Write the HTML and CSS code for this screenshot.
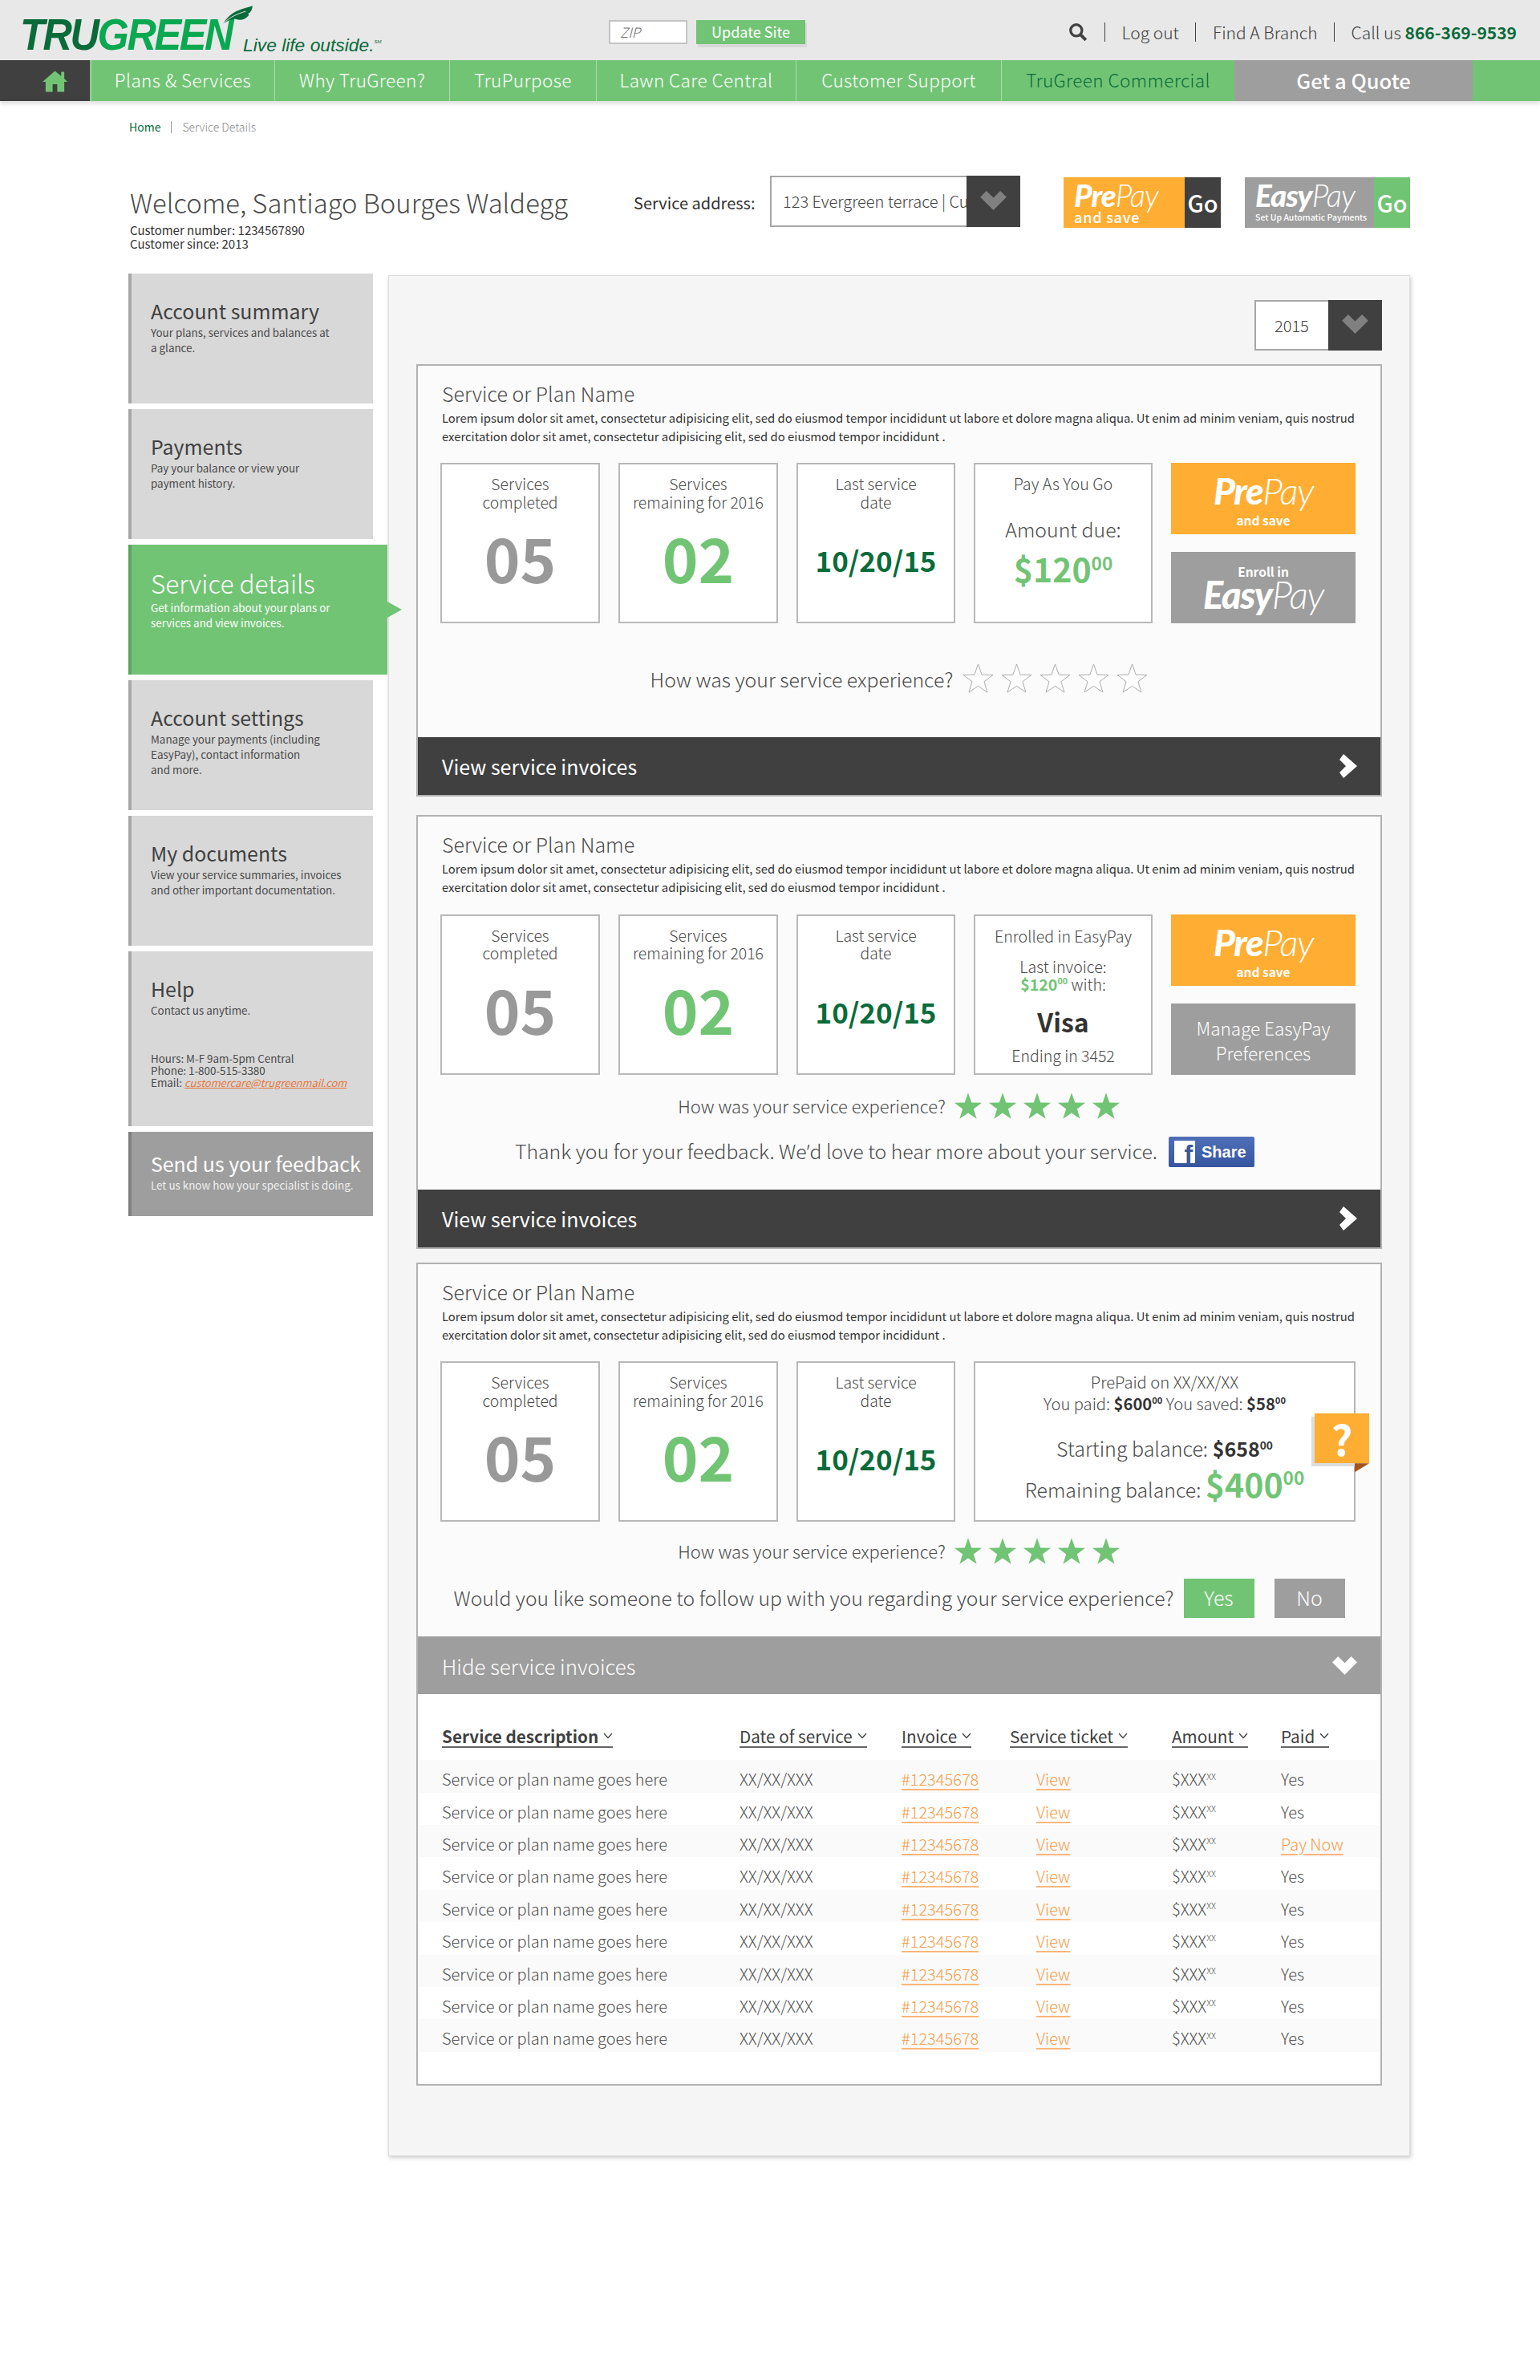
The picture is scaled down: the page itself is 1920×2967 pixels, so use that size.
FILE: index.html
```html
<!DOCTYPE html>
<html lang="en">
<head>
<meta charset="utf-8">
<title>TruGreen - Service Details</title>
<link rel="stylesheet" href="styles.css">
</head>
<body>
<svg class="defs" aria-hidden="true">
  <symbol id="star" viewBox="0 0 40 38"><polygon points="20,1 24.7,14.5 39,14.8 27.6,23.4 31.8,37 20,29 8.2,37 12.4,23.4 1,14.8 15.3,14.5"/></symbol>
  <symbol id="chev-d" viewBox="0 0 34 26"><polygon points="0,9 8,1 17,10 26,1 34,9 17,26"/></symbol>
  <symbol id="chev-r" viewBox="0 0 22 30"><polygon points="5,0 22,15 5,30 0,23 8,15 0,7"/></symbol>
  <symbol id="chev-s" viewBox="0 0 12 8"><polyline points="1,1 6,6.5 11,1" fill="none" stroke="currentColor" stroke-width="1.3"/></symbol>
</svg>

<header class="topbar">
  <div class="logo">
    <span class="logo-word"><span class="logo-tru">TRU</span><span class="logo-green">GREEN</span></span>
    <svg class="logo-leaf" viewBox="0 0 40 24"><path d="M1 23C6 15 12 9 20 6 27 3 34 2 39 0 38 6 36 9 33 10 35 11 34 13 32 14 29 17 24 19 18 17 14 16 8 18 1 23Z" fill="#0a6b3a"/><path d="M1 23C10 14 20 10 30 7" stroke="#e8e8e8" stroke-width="1" fill="none"/></svg>
    <span class="logo-tag">Live life outside.<sup class="logo-sm">SM</sup></span>
  </div>
  <div class="zip-box">ZIP</div>
  <div class="update-btn">Update Site</div>
  <nav class="util">
    <svg class="search-ico" viewBox="0 0 22 22"><circle cx="9" cy="9" r="6.5" fill="none" stroke="#404040" stroke-width="3"/><line x1="14" y1="14" x2="20" y2="20" stroke="#404040" stroke-width="3.6"/></svg>
    <span class="util-sep"></span>
    <span>Log out</span>
    <span class="util-sep"></span>
    <span>Find A Branch</span>
    <span class="util-sep"></span>
    <span>Call us <b class="phone">866-369-9539</b></span>
  </nav>
</header>

<nav class="mainnav">
  <a class="nav-home"><svg viewBox="0 0 32 27"><path d="M16 0 24 6.5V1H28V10L32 14H28V27H19V17H13V27H4V14H0Z" fill="#72c475"/></svg></a>
  <a class="nav-item w-plans">Plans &amp; Services</a>
  <a class="nav-item w-why">Why TruGreen?</a>
  <a class="nav-item w-pur">TruPurpose</a>
  <a class="nav-item w-lawn">Lawn Care Central</a>
  <a class="nav-item w-sup">Customer Support</a>
  <a class="nav-item w-com">TruGreen Commercial</a>
  <a class="nav-quote">Get a Quote</a>
</nav>

<div class="crumbs"><a class="crumb-home">Home</a><span class="crumb-sep"></span><span>Service Details</span></div>

<section class="welcome">
  <div class="welcome-left">
    <h1>Welcome, Santiago Bourges Waldegg</h1>
    <p>Customer number: 1234567890</p>
    <p>Customer since: 2013</p>
  </div>
  <div class="addr-label">Service address:</div>
  <div class="select addr-select">
    <div class="select-val">123 Evergreen terrace | Customer</div>
    <div class="select-arrow"><svg><use href="#chev-d"/></svg></div>
  </div>
  <div class="promo promo-pre">
    <div class="promo-main"><div class="brand brand-s"><b>Pre</b><i>Pay</i></div><div class="promo-sub">and save</div></div>
    <div class="promo-go go-dark">Go</div>
  </div>
  <div class="promo promo-easy">
    <div class="promo-main"><div class="brand brand-s"><b>Easy</b><i>Pay</i></div><div class="promo-sub2">Set Up Automatic Payments</div></div>
    <div class="promo-go go-green">Go</div>
  </div>
</section>

<div class="columns">
  <aside class="side">
    <a class="side-item"><h3>Account summary</h3><p>Your plans, services and balances at<br>a glance.</p></a>
    <a class="side-item"><h3>Payments</h3><p>Pay your balance or view your<br>payment history.</p></a>
    <a class="side-item active"><h3>Service details</h3><p>Get information about your plans or<br>services and view invoices.</p></a>
    <a class="side-item"><h3>Account settings</h3><p>Manage your payments (including<br>EasyPay), contact information<br>and more.</p></a>
    <a class="side-item"><h3>My documents</h3><p>View your service summaries, invoices<br>and other important documentation.</p></a>
    <div class="side-item help"><h3>Help</h3><p>Contact us anytime.</p>
      <p class="help-lines">Hours: M-F 9am-5pm Central<br>Phone: 1-800-515-3380<br>Email: <a class="mail">customercare@trugreenmail.com</a></p></div>
    <a class="side-item feedback"><h3>Send us your feedback</h3><p>Let us know how your specialist is doing.</p></a>
  </aside>

  <main class="panel">
    <div class="year-row">
      <div class="select year-select">
        <div class="select-val">2015</div>
        <div class="select-arrow"><svg><use href="#chev-d"/></svg></div>
      </div>
    </div>

    <article class="card">
      <h2>Service or Plan Name</h2>
      <p class="lorem">Lorem ipsum dolor sit amet, consectetur adipisicing elit, sed do eiusmod tempor incididunt ut labore et dolore magna aliqua. Ut enim ad minim veniam, quis nostrud<br>exercitation dolor sit amet, consectetur adipisicing elit, sed do eiusmod tempor incididunt .</p>
      <div class="stats">
        <div class="stat w199"><div class="stat-label">Services<br>completed</div><div class="stat-num grey">05</div></div>
        <div class="stat w199"><div class="stat-label">Services<br>remaining for 2016</div><div class="stat-num green">02</div></div>
        <div class="stat w198"><div class="stat-label">Last service<br>date</div><div class="stat-date">10/20/15</div></div>
        <div class="stat w223 due">
          <div class="due-head">Pay As You Go</div>
          <div class="due-label">Amount due:</div>
          <div class="due-amt">$120<sup>00</sup></div>
        </div>
        <div class="actions">
          <a class="act act-orange"><div class="brand brand-l"><b>Pre</b><i>Pay</i></div><div class="act-sub">and save</div></a>
          <a class="act act-grey"><div class="act-sub enroll">Enroll in</div><div class="brand brand-x"><b>Easy</b><i>Pay</i></div></a>
        </div>
      </div>
      <div class="rating rating-lg">
        <span>How was your service experience?</span>
        <span class="stars stars-lg">
          <svg><use href="#star"/></svg><svg><use href="#star"/></svg><svg><use href="#star"/></svg><svg><use href="#star"/></svg><svg><use href="#star"/></svg>
        </span>
      </div>
      <a class="bar bar-dark bar-c1">View service invoices<svg class="chev-r"><use href="#chev-r"/></svg></a>
    </article>

    <article class="card card-2">
      <h2>Service or Plan Name</h2>
      <p class="lorem">Lorem ipsum dolor sit amet, consectetur adipisicing elit, sed do eiusmod tempor incididunt ut labore et dolore magna aliqua. Ut enim ad minim veniam, quis nostrud<br>exercitation dolor sit amet, consectetur adipisicing elit, sed do eiusmod tempor incididunt .</p>
      <div class="stats">
        <div class="stat w199"><div class="stat-label">Services<br>completed</div><div class="stat-num grey">05</div></div>
        <div class="stat w199"><div class="stat-label">Services<br>remaining for 2016</div><div class="stat-num green">02</div></div>
        <div class="stat w198"><div class="stat-label">Last service<br>date</div><div class="stat-date">10/20/15</div></div>
        <div class="stat w223 enrolled">
          <div class="en-head">Enrolled in EasyPay</div>
          <div class="en-line">Last invoice:</div>
          <div class="en-line"><b class="en-amt">$120<sup>00</sup></b> with:</div>
          <div class="en-visa">Visa</div>
          <div class="en-end">Ending in 3452</div>
        </div>
        <div class="actions">
          <a class="act act-orange"><div class="brand brand-l"><b>Pre</b><i>Pay</i></div><div class="act-sub">and save</div></a>
          <a class="act act-grey act-manage">Manage EasyPay<br>Preferences</a>
        </div>
      </div>
      <div class="rating rating-sm">
        <span>How was your service experience?</span>
        <span class="stars stars-on">
          <svg><use href="#star"/></svg><svg><use href="#star"/></svg><svg><use href="#star"/></svg><svg><use href="#star"/></svg><svg><use href="#star"/></svg>
        </span>
      </div>
      <div class="thanks">
        <span class="thanks-text">Thank you for your feedback. We<span class="apos">’</span>d love to hear more about your service.</span>
        <a class="fb"><span class="fb-f">f</span><span>Share</span></a>
      </div>
      <a class="bar bar-dark bar-c2">View service invoices<svg class="chev-r"><use href="#chev-r"/></svg></a>
    </article>

    <article class="card card-3">
      <h2>Service or Plan Name</h2>
      <p class="lorem">Lorem ipsum dolor sit amet, consectetur adipisicing elit, sed do eiusmod tempor incididunt ut labore et dolore magna aliqua. Ut enim ad minim veniam, quis nostrud<br>exercitation dolor sit amet, consectetur adipisicing elit, sed do eiusmod tempor incididunt .</p>
      <div class="stats">
        <div class="stat w199"><div class="stat-label">Services<br>completed</div><div class="stat-num grey">05</div></div>
        <div class="stat w199"><div class="stat-label">Services<br>remaining for 2016</div><div class="stat-num green">02</div></div>
        <div class="stat w198"><div class="stat-label">Last service<br>date</div><div class="stat-date">10/20/15</div></div>
        <div class="stat prepaid">
          <div class="pp-head">PrePaid on XX/XX/XX</div>
          <div class="pp-head">You paid: <b>$600<sup>00</sup></b> You saved: <b>$58<sup>00</sup></b></div>
          <div class="pp-start">Starting balance: <b>$658<sup>00</sup></b></div>
          <div class="pp-rem">Remaining balance: <b>$400<sup>00</sup></b></div>
          <div class="flag">?</div>
        </div>
      </div>
      <div class="rating rating-sm rating-c3">
        <span>How was your service experience?</span>
        <span class="stars stars-on">
          <svg><use href="#star"/></svg><svg><use href="#star"/></svg><svg><use href="#star"/></svg><svg><use href="#star"/></svg><svg><use href="#star"/></svg>
        </span>
      </div>
      <div class="follow">
        <span class="follow-text">Would you like someone to follow up with you regarding your service experience?</span>
        <a class="yn yn-yes">Yes</a>
        <a class="yn yn-no">No</a>
      </div>
      <a class="bar bar-grey">Hide service invoices<svg class="chev-d"><use href="#chev-d"/></svg></a>
      <div class="invoices">
        <div class="inv-head">
          <div><span class="th th-sel">Service description<svg><use href="#chev-s"/></svg></span></div>
          <div><span class="th">Date of service<svg><use href="#chev-s"/></svg></span></div>
          <div><span class="th">Invoice<svg><use href="#chev-s"/></svg></span></div>
          <div><span class="th">Service ticket<svg><use href="#chev-s"/></svg></span></div>
          <div><span class="th">Amount<svg><use href="#chev-s"/></svg></span></div>
          <div><span class="th">Paid<svg><use href="#chev-s"/></svg></span></div>
        </div>
        <div class="inv-row"><div>Service or plan name goes here</div><div>XX/XX/XXX</div><div><a class="lnk">#12345678</a></div><div class="td-view"><a class="lnk">View</a></div><div>$XXX<sup>XX</sup></div><div>Yes</div></div>
        <div class="inv-row"><div>Service or plan name goes here</div><div>XX/XX/XXX</div><div><a class="lnk">#12345678</a></div><div class="td-view"><a class="lnk">View</a></div><div>$XXX<sup>XX</sup></div><div>Yes</div></div>
        <div class="inv-row"><div>Service or plan name goes here</div><div>XX/XX/XXX</div><div><a class="lnk">#12345678</a></div><div class="td-view"><a class="lnk">View</a></div><div>$XXX<sup>XX</sup></div><div><a class="lnk">Pay Now</a></div></div>
        <div class="inv-row"><div>Service or plan name goes here</div><div>XX/XX/XXX</div><div><a class="lnk">#12345678</a></div><div class="td-view"><a class="lnk">View</a></div><div>$XXX<sup>XX</sup></div><div>Yes</div></div>
        <div class="inv-row"><div>Service or plan name goes here</div><div>XX/XX/XXX</div><div><a class="lnk">#12345678</a></div><div class="td-view"><a class="lnk">View</a></div><div>$XXX<sup>XX</sup></div><div>Yes</div></div>
        <div class="inv-row"><div>Service or plan name goes here</div><div>XX/XX/XXX</div><div><a class="lnk">#12345678</a></div><div class="td-view"><a class="lnk">View</a></div><div>$XXX<sup>XX</sup></div><div>Yes</div></div>
        <div class="inv-row"><div>Service or plan name goes here</div><div>XX/XX/XXX</div><div><a class="lnk">#12345678</a></div><div class="td-view"><a class="lnk">View</a></div><div>$XXX<sup>XX</sup></div><div>Yes</div></div>
        <div class="inv-row"><div>Service or plan name goes here</div><div>XX/XX/XXX</div><div><a class="lnk">#12345678</a></div><div class="td-view"><a class="lnk">View</a></div><div>$XXX<sup>XX</sup></div><div>Yes</div></div>
        <div class="inv-row"><div>Service or plan name goes here</div><div>XX/XX/XXX</div><div><a class="lnk">#12345678</a></div><div class="td-view"><a class="lnk">View</a></div><div>$XXX<sup>XX</sup></div><div>Yes</div></div>
      </div>
    </article>
  </main>
</div>
</body>
</html>
```
FILE: styles.css
```css
* { box-sizing: border-box; }
html, body { margin: 0; padding: 0; }
body {
  width: 1920px;
  min-height: 2967px;
  background: #fff;
  color: #404040;
  font-family: "Noto Sans CJK SC", "Noto Sans", sans-serif;
  font-weight: 400;
}
h1, h2, h3, p { margin: 0; font-weight: inherit; }
sup { font-size: 55%; line-height: 0; vertical-align: baseline; position: relative; top: -0.7em; }
.defs { display: none; }
.apos { font-family: "Noto Sans", sans-serif; }

/* top bar */
.topbar { height: 75px; background: #e8e8e8; display: flex; align-items: flex-start; }
.logo { position: relative; flex: 0 0 759px; height: 75px; }
.logo-word {
  position: absolute; left: 25px; top: 11px;
  font: italic 700 56px/64px "Liberation Sans", sans-serif;
  letter-spacing: -2.6px; white-space: nowrap;
  transform: scaleX(.9); transform-origin: left center;
}
.logo-tru { color: #0a6b3a; }
.logo-green { color: #0aa851; }
.logo-leaf { position: absolute; left: 277px; top: 7px; width: 39px; height: 24px; }
.logo-tag {
  position: absolute; left: 303px; top: 41px;
  font: italic 400 22.8px/30px "Liberation Sans", sans-serif;
  color: #0a6b3a; white-space: nowrap;
}
.logo-sm { font-size: 6px; top: -1.6em; }
.zip-box {
  margin-top: 25px; width: 98px; height: 30px; background: #fff;
  border: 2px solid #c4c4c4; padding-left: 12px;
  font-size: 17px; line-height: 26px; font-style: italic; color: #707070; font-weight: 300;
}
.update-btn {
  margin: 25px 0 0 11px; width: 136px; height: 30px; background: #72c475; color: #fff;
  font-size: 18px; line-height: 29px; text-align: center; box-shadow: 2px 4px 0 #d8d8d8;
}
.util {
  margin: 22px 29px 0 auto; display: flex; align-items: center; gap: 20.5px;
  height: 36px; font-size: 21px; font-weight: 300; color: #404040;
}
.search-ico { width: 24px; height: 24px; }
.util-sep { width: 1px; height: 24px; background: #404040; }
.phone { color: #0a6b3a; font-weight: 700; }

/* nav */
.mainnav { height: 51px; background: #72c475; display: flex; box-shadow: 0 4px 4px #e4e4e4; }
.nav-home { width: 112px; margin-right: 1px; background: #404040; display: flex; align-items: center; justify-content: center; }
.nav-home svg { width: 31px; height: 27px; margin: 1px 0 0 24px; }
.nav-item {
  color: #fff; font-size: 22.5px; line-height: 48px; text-align: center; font-weight: 300;
  border-left: 1px solid #a8dcaa; white-space: nowrap; letter-spacing: .4px;
}
.nav-item:first-of-type { border-left: 0; }
.w-plans { width: 229px; } .w-why { width: 218px; } .w-pur { width: 183px; }
.w-lawn { width: 249px; } .w-sup { width: 256px; } .w-com { width: 291px; color: #0a6b3a; }
.nav-quote { width: 297px; background: #9e9e9e; color: #fff; font-size: 25.5px; line-height: 49px; text-align: center; font-weight: 500; }

/* breadcrumb */
.crumbs { margin: 23px 0 0 161px; height: 18px; display: flex; align-items: center; font-size: 14px; font-weight: 300; color: #8a8a8a; line-height: 18px; }
.crumb-home { color: #0a6b3a; font-weight: 400; }
.crumb-sep { width: 1px; height: 15px; background: #999; margin: 0 13px; }

/* welcome row */
.welcome { margin: 52px 0 0 162px; height: 122px; display: flex; align-items: flex-start; }
.welcome-left { width: 628px; }
.welcome-left h1 { font-size: 32.8px; line-height: 66px; font-weight: 300; margin-bottom: -7px; white-space: nowrap; color: #4a4a4a; }
.welcome-left p { font-size: 15px; line-height: 17px; color: #333; }
.addr-label { width: 170px; font-size: 20px; line-height: 68px; color: #333; }
.select { display: flex; border: 2px solid #a6a6a6; background: #fff; }
.select-val { flex: 1; overflow: hidden; white-space: nowrap; }
.select-arrow { background: #404040; display: flex; align-items: center; justify-content: center; margin: -2px -2px -2px 0; }
.select-arrow svg { width: 33px; height: 25px; fill: #808080; margin-top: -4px; }
.addr-select { width: 312px; height: 64px; }
.addr-select .select-val { padding-left: 14px; font-size: 20px; line-height: 60px; font-weight: 300; }
.addr-select .select-arrow { width: 67px; }

.promo { display: flex; height: 63px; margin-top: 2px; color: #fff; }
.promo-pre { margin-left: 54px; width: 196px; }
.promo-easy { margin-left: 30px; width: 206px; }
.promo-main { flex: 1; padding-left: 13px; }
.promo-pre .promo-main { background: #ffae33; }
.promo-easy .promo-main { background: #9e9e9e; }
.promo-go { display: flex; align-items: center; justify-content: center; font-size: 29px; font-weight: 500; line-height: 1; }
.go-dark { width: 45px; background: #404040; }
.go-green { width: 45px; background: #72c475; }
.brand { font-family: Lato, "Liberation Sans", sans-serif; font-style: italic; white-space: nowrap; }
.brand b { font-weight: 900; }
.brand i { font-weight: 300; }
.brand-s { font-size: 38.5px; line-height: 38px; padding-top: 3px; letter-spacing: -1px; }
.promo-sub { font-size: 18px; line-height: 18px; font-weight: 500; letter-spacing: .8px; margin-top: -1px; }
.promo-sub2 { font-size: 10.5px; line-height: 16px; font-weight: 500; margin-top: 1px; }

/* columns */
.columns { margin: 0 0 0 160px; display: flex; align-items: flex-start; width: 1598px; }
.side { width: 324px; flex: none; display: flex; flex-direction: column; gap: 7px; }
.side-item {
  display: block; width: 305px; height: 162px; background: #d8d8d8; border-left: 4px solid #a8a8a8;
  padding: 29px 0 0 24px; color: #4a4a4a;
}
.side-item h3 { font-size: 24.9px; line-height: 34px; color: #404040; white-space: nowrap; font-weight: 400; }
.side-item p { font-size: 13.4px; line-height: 19px; margin-top: 1px; }
.side-item.active { position: relative; width: 323px; background: #72c475; border-left-color: #5aa65e; color: #fff; padding-top: 24px; }
.side-item.active::after {
  content: ""; position: absolute; left: 100%; top: 71px;
  border-left: 18px solid #72c475; border-top: 10px solid transparent; border-bottom: 10px solid transparent;
}
.side-item.active h3 { font-size: 31.6px; line-height: 46px; color: #fff; font-weight: 300; }
.side-item.active p { margin-top: -1px; }
.side-item.help { height: 218px; }
.help .help-lines { margin-top: 43px; line-height: 15px; }
.mail { color: #e8743a; font-style: italic; text-decoration: underline; font-size: 12.9px; }
.side-item.feedback { height: 105px; background: #9e9e9e; border-left-color: #808080; padding-top: 22px; color: #f0f0f0; }
.feedback h3 { color: #fff; }

/* panel */
.panel {
  width: 1274px; flex: none; margin-top: 2px; background: #f5f5f5; border: 1px solid #ddd;
  box-shadow: 1px 2px 5px rgba(0,0,0,.22); padding: 30px 34px 87px;
}
.year-row { display: flex; justify-content: flex-end; margin-bottom: 17px; }
.year-select { width: 159px; height: 63px; }
.year-select .select-val { padding-left: 23px; font-size: 20px; line-height: 59px; font-weight: 300; }
.year-select .select-arrow { width: 67px; }

.card { width: 1204px; background: #fbfbfb; border: 2px solid #b2b2b2; margin-bottom: 23px; }
.card-2 { margin-bottom: 17px; }
.card-3 { margin-bottom: 0; height: 1026px; }
.card h2 { font-size: 25px; line-height: 40px; font-weight: 300; padding: 14px 0 0 30px; color: #4a4a4a; }
.lorem { font-size: 14.85px; line-height: 22.7px; padding-left: 30px; color: #333; white-space: nowrap; margin-bottom: 22px; }
.stats { display: flex; gap: 23px; padding-left: 28px; height: 200px; }
.stat { background: #fff; border: 2px solid #b8b8b8; height: 200px; text-align: center; font-weight: 300; flex: none; color: #4a4a4a; }
.w199 { width: 199px; } .w198 { width: 198px; } .w223 { width: 223px; }
.stat-label { font-size: 19.4px; line-height: 22.5px; padding-top: 13px; }
.stat-num { font-size: 76px; line-height: 100px; margin-top: 7px; font-weight: 700; }
.grey { color: #999; }
.green { color: #72c475; }
.stat-date { font-size: 35px; line-height: 100px; margin-top: 11px; font-weight: 700; color: #0a6b3a; }
.due-head { font-size: 19.8px; line-height: 26px; padding-top: 11px; }
.due-label { font-size: 24.8px; line-height: 34px; margin-top: 26px; }
.due-amt { font-size: 41px; line-height: 56px; margin-top: 4px; font-weight: 700; color: #72c475; }
.actions { width: 230px; flex: none; display: flex; flex-direction: column; gap: 22px; }
.act { flex: 0 0 89px; display: block; color: #fff; text-align: center; }
.act-orange { background: #ffae33; }
.act-grey { background: #9e9e9e; }
.brand-l { font-size: 46px; line-height: 46px; padding-top: 12px; letter-spacing: -1.4px; }
.brand-x { font-size: 47px; line-height: 36px; letter-spacing: -1.4px; }
.act-sub { font-size: 15.5px; line-height: 22px; font-weight: 700; }
.act-orange .act-sub { margin-top: 2px; }
.enroll { padding-top: 13px; }
.act-manage { font-size: 22.5px; line-height: 31px; font-weight: 300; padding-top: 15px; }

.rating { display: flex; align-items: center; justify-content: center; color: #4a4a4a; }
.rating-lg { margin-top: 49px; height: 39px; font-size: 24.8px; font-weight: 300; gap: 12px; }
.rating-sm { margin-top: 21px; height: 35px; font-size: 21.9px; font-weight: 300; gap: 10px; }
.rating-c3 { margin-top: 19px; }
.stars { display: flex; gap: 9px; }
.stars svg { width: 39px; height: 39px; fill: #fff; stroke: #aaa; stroke-width: 1; }
.stars-lg svg { overflow: visible; }
.stars-on { gap: 7px; }
.stars-on svg { width: 36px; height: 35px; fill: #72c475; stroke: none; }

.bar { display: flex; align-items: center; justify-content: space-between; height: 72px; padding: 0 29px 0 30px; color: #fff; font-size: 25px; }
.bar-dark { background: #404040; }
.bar-grey { background: #9e9e9e; margin-top: 23px; font-size: 25.8px; font-weight: 300; }
.bar-c1 { margin-top: 54px; }
.bar-c2 { margin-top: 28px; }
.chev-r { width: 22px; height: 30px; fill: #fff; }
.chev-d { width: 31px; height: 24px; fill: #fff; }

.thanks { margin: 21px 36px 0 0; display: flex; align-items: center; justify-content: center; gap: 14px; height: 38px; font-size: 24.8px; font-weight: 300; color: #4a4a4a; white-space: nowrap; }
.thanks-text { margin-top: -4px; }
.fb {
  width: 107px; height: 38px; border-radius: 2px; background: linear-gradient(#4f6fb8, #35559f);
  display: flex; align-items: center; gap: 8px; padding-left: 7px; color: #fff;
  font: 700 20px/38px "Liberation Sans", sans-serif;
}
.fb-f {
  width: 26px; height: 28px; background: #fff; color: #3b5998; font-size: 32px; line-height: 34px;
  text-align: right; padding-right: 3px; overflow: hidden; border-radius: 1px;
}

/* enrolled box */
.en-head { font-size: 19.6px; line-height: 26px; padding-top: 12px; }
.en-line { font-size: 19.6px; line-height: 22px; }
.en-head + .en-line { margin-top: 14px; }
.en-amt { color: #72c475; font-weight: 700; }
.en-visa { font-size: 32px; line-height: 44px; font-weight: 700; margin-top: 13px; color: #333; }
.en-end { font-size: 19.5px; line-height: 26px; margin-top: 8px; }

/* prepaid box */
.prepaid { width: 476px; position: relative; }
.pp-head { font-size: 20.2px; line-height: 27px; }
.pp-head:first-child { padding-top: 11px; line-height: 26px; height: 37px; }
.pp-head b { font-weight: 700; color: #333; }
.pp-start { font-size: 25px; line-height: 36px; margin-top: 24px; }
.pp-start b { font-weight: 700; color: #333; }
.pp-rem { font-size: 24.8px; line-height: 48px; margin-top: 2px; }
.pp-rem b { font-size: 41px; color: #72c475; font-weight: 700; }
.flag {
  position: absolute; left: 423px; top: 63px; width: 68px; height: 62px;
  background: #ffae33; color: #fff; font-size: 52px; line-height: 62px; font-weight: 700; text-align: center;
  box-shadow: -4px 4px 0 #ddd;
}
.flag::after {
  content: ""; position: absolute; right: 0; top: 100%; width: 18px; height: 11px;
  background: #a3541a; clip-path: polygon(0 0, 100% 0, 0 100%);
}

.follow { margin-top: 17px; height: 49px; display: flex; align-items: center; justify-content: center; font-size: 24.7px; font-weight: 300; white-space: nowrap; color: #4a4a4a; }
.follow-text { margin-top: -4px; }
.yn { width: 88px; height: 49px; color: #fff; text-align: center; line-height: 47px; font-size: 25px; }
.yn-yes { background: #72c475; margin-left: 12px; }
.yn-no { background: #9e9e9e; margin-left: 25px; }

/* invoice table */
.invoices { background: #fff; height: 485px; padding-top: 39px; }
.inv-head, .inv-row { display: grid; grid-template-columns: 371px 202px 135px 202px 136px 1fr; padding-left: 30px; }
.inv-head { font-size: 20.7px; line-height: 26px; margin-bottom: 15px; height: 28px; }
.th { display: inline-flex; align-items: center; gap: 6px; height: 28px; border-bottom: 2px solid #666; white-space: nowrap; }
.th svg { width: 12px; height: 8px; color: #404040; }
.th-sel { font-weight: 700; }
.inv-row { height: 40.4px; padding-top: 11px; font-size: 20px; line-height: 26px; font-weight: 300; white-space: nowrap; color: #4f4f4f; }
.inv-row:nth-of-type(even) { background: #fafafa; }
.lnk { color: #f79a46; text-decoration: underline; text-decoration-color: #fbb67a; text-decoration-thickness: 2px; text-underline-offset: 4px; }
.td-view { padding-left: 33px; }
```
